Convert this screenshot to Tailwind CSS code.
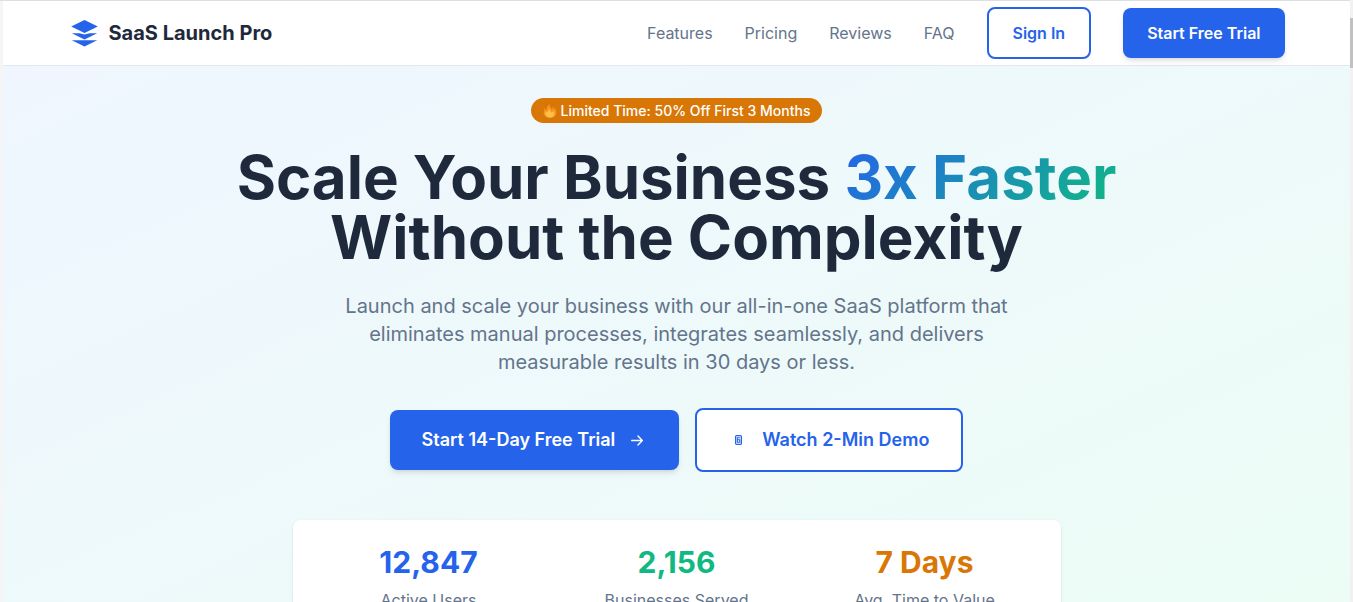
<!DOCTYPE html>
<html lang="en">
<head>
    <meta charset="UTF-8">
    <meta name="viewport" content="width=device-width, initial-scale=1.0">
    <title>SaaS Launch Pro</title>
    <script src="https://cdn.jsdelivr.net/npm/@tailwindcss/browser@4"></script>
</head>
<body class="h-screen overflow-hidden border-t border-[#dedfe0] bg-[#f5f5f5] px-[3px] font-['Inter',sans-serif] text-[#1e293b]">
    <!-- Scrollbar -->
    <div class="fixed top-0 right-0 w-[3px] h-full bg-[#f1f1f1] z-10">
        <div class="mt-[18px] h-[50px] bg-[#c1c1c1]"></div>
    </div>

    <!-- Header -->
    <header class="bg-white border-b border-[#e2e8f0]">
        <nav class="max-w-7xl mx-auto px-8 h-16 flex items-center justify-between">
            <a href="#" class="flex items-center gap-2">
                <svg class="w-8 h-8 text-[#2563eb]" viewBox="0 0 32 32" fill="currentColor" aria-hidden="true">
                    <path d="M15.500 3 28.800 9.500 15.500 16 2.200 9.500Z"/>
                    <path d="M2.800 16.200h7.500l5.200 1.300 5.200-1.300h7.500l-12.700 6.300Z"/>
                    <path d="M2.800 23.200h25.400l-12.700 6.300Z"/>
                </svg>
                <span class="text-xl font-bold">SaaS Launch Pro</span>
            </a>
            <div class="flex items-center gap-8 text-base text-[#64748b]">
                <a href="#features">Features</a>
                <a href="#pricing">Pricing</a>
                <a href="#reviews">Reviews</a>
                <a href="#faq">FAQ</a>
                <button type="button" class="px-6 py-3 rounded-lg border-2 border-[#2563eb] bg-white font-semibold text-[#2563eb]">Sign In</button>
                <button type="button" class="px-6 py-[13px] rounded-lg bg-[#2563eb] font-semibold text-white shadow-md">Start Free Trial</button>
            </div>
        </nav>
    </header>

    <!-- Hero -->
    <section class="min-h-full pt-8 px-8 bg-linear-to-br/srgb from-[#eff6ff] to-[#ecfdf5]">
        <div class="max-w-4xl mx-auto flex flex-col items-center text-center">
            <div class="mb-6 flex items-center gap-1 px-3 h-[25px] rounded-full bg-[#d97706] text-sm font-medium text-white">
                <svg class="w-[14px] h-[14px]" viewBox="0 0 14 14" aria-hidden="true">
                    <path fill="#f7931e" d="M7 14C3.500 14 .7 12 .7 8.800.7 7 1.200 5 2 4c.2 1.200.5 2 1.200 2.600C3.400 4 4.500 1.500 6.500 0c0 2.500 1.500 3.600 2.300 5.400.7-.7 1-1.700.9-3 .9.700 1.300 1.700 1.300 2.800.5-.3.800-.7 1-1.200.8 1.200 1.300 3 1.300 4.800C13.300 12 10.500 14 7 14Z"/>
                    <path fill="#fdc04b" d="M7 13.500c-2.700 0-4.700-1.500-4.700-3.900 0-1 .3-1.900.8-2.500.3.900.8 1.500 1.600 1.500 0-1.700.6-3 1.700-3.900.1 1.700 1.500 2.400 1.900 3.900.8-.1 1.300-.8 1.600-1.700.9.700 1.600 1.700 1.600 2.700 0 2.400-1.900 3.900-4.500 3.900Z"/>
                </svg>
                <span>Limited Time: 50% Off First 3 Months</span>
            </div>

            <h1 class="mb-[25px] text-[60px] leading-[60px] font-bold">
                Scale Your Business
                <span class="bg-linear-135/srgb from-[#2563eb] to-[#10b981] bg-clip-text text-transparent">3x Faster</span>
                <br>Without the Complexity
            </h1>

            <p class="mb-8 max-w-2xl text-xl text-[#64748b]">
                Launch and scale your business with our all-in-one SaaS platform that eliminates manual processes, integrates seamlessly, and delivers measurable results in 30 days or less.
            </p>

            <div class="mb-12 flex items-center justify-center gap-4 text-lg font-semibold">
                <button type="button" class="flex items-center gap-4 h-[60px] px-8 rounded-lg bg-[#2563eb] text-white shadow-md">
                    Start 14-Day Free Trial
                    <svg class="w-3 h-3 mr-1" viewBox="0 0 12 12" fill="none" stroke="currentColor" stroke-width="1.400" stroke-linecap="round" stroke-linejoin="round" aria-hidden="true">
                        <path d="M.7 6.500h10.500M7 2l4.300 4.500L7 11"/>
                    </svg>
                </button>
                <button type="button" class="flex items-center gap-5 h-16 pl-[38px] pr-8 rounded-lg border-2 border-[#2563eb] bg-white text-[#2563eb]">
                    <svg class="w-[7px] h-[10px]" viewBox="0 0 7 10" fill="none" stroke="currentColor" aria-hidden="true">
                        <rect x=".6" y=".6" width="5.800" height="8.800" rx="1" stroke-width="1.200"/>
                        <path d="M5.200 2.800H2.300v2h2.500v2.500H2.300V4.800" stroke-width="1.100"/>
                    </svg>
                    Watch 2-Min Demo
                </button>
            </div>
        </div>

        <!-- Stats -->
        <div class="max-w-3xl mx-auto p-6 grid grid-cols-3 gap-6 rounded-lg bg-white text-center shadow-sm">
            <div>
                <div class="mb-2 text-3xl font-bold text-[#2563eb]">12,847</div>
                <div class="text-base text-[#64748b]">Active Users</div>
            </div>
            <div>
                <div class="mb-2 text-3xl font-bold text-[#10b981]">2,156</div>
                <div class="text-base text-[#64748b]">Businesses Served</div>
            </div>
            <div>
                <div class="mb-2 text-3xl font-bold text-[#d97706]">7 Days</div>
                <div class="text-base text-[#64748b]">Avg. Time to Value</div>
            </div>
        </div>
    </section>
</body>
</html>
